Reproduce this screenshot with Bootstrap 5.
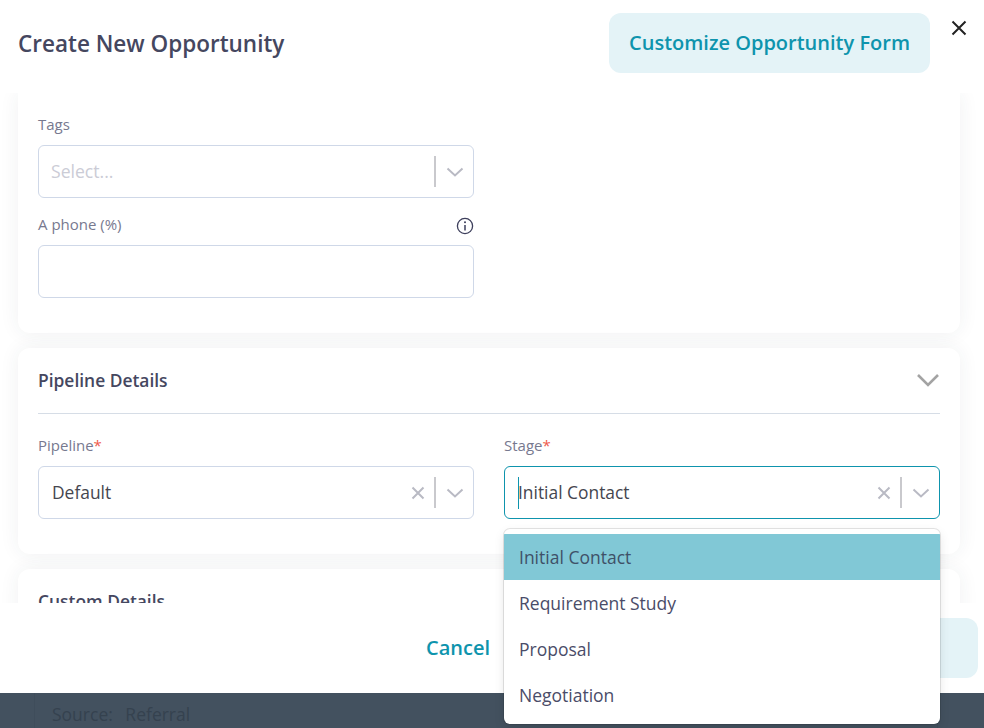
<!DOCTYPE html>
<html lang="en">
<head>
<meta charset="utf-8">
<title>Create New Opportunity</title>
<link href="https://cdn.jsdelivr.net/npm/bootstrap@5.3.0/dist/css/bootstrap.min.css" rel="stylesheet">
<style>
html,body{height:728px;overflow:hidden}
body{font-family:"Open Sans","Noto Sans",sans-serif;background:#43515f;color:#3d3f5c;position:relative}
.sheet{height:693px;background:#fff;display:flex;flex-direction:column}
.sheet-head{height:93px;padding:13px 54px 20px 18px;position:relative}
.sheet-title{font-size:22.5px;font-weight:600;color:#45475f;margin:0;line-height:62px}
.btn-soft{background:#e4f3f7;color:#0e94ad;font-weight:600;font-size:20px;border-radius:12px;border:0;height:60px;padding:0 20px}
.x-close{position:absolute;top:19px;right:16px;width:18px;height:18px;background:none;border:0;padding:0;line-height:0}
.sheet-body{height:510px;overflow:hidden;padding:0 24px 0 18px;background:#fff}
.panel{background:#fff;border-radius:12px;box-shadow:0 0 20px rgba(40,50,70,.07);padding:0 20px;margin-bottom:15px}
.panel-first{height:240px;padding-top:21px;border-radius:0 0 12px 12px}
.panel-second{height:206px;padding-top:16px}
.panel-third{height:70px;padding-top:16px}
.panel-head{font-size:17.4px;font-weight:600;color:#45475f;line-height:32px}
.panel-rule{border-top:1px solid #d6dde6;margin-top:17px;padding-top:21px}
.half{width:436px}
.fld-label{font-size:15px;color:#77798f;line-height:21px;margin-bottom:10px}
.fld-info{margin-top:2px}
.req{color:#ef5a4c}
.fld-box{height:53px;border:1px solid #cfd8e8;border-radius:6px;font-size:17.4px;color:#45464f;padding:0 0 0 13px;background:#fff}
.fld-focus{border-color:#0e94ad}
.fld-muted{color:#cbccd6;padding-left:12px;font-size:17.6px}
.caret-bar{width:1px;height:32px;background:#0e94ad;margin-right:-1px}
.ind-x{margin-right:9px;line-height:0}
.ind-sep{width:2px;height:31px;background:#c9c9cd}
.ind-chev{width:37px;text-align:center;line-height:0}
.sheet-foot{height:90px;background:#fff;padding:15px 6px 15px 0;position:relative;z-index:1}
.link-cancel{color:#0e94ad;font-size:20px;font-weight:600;text-decoration:none;margin-right:14px}
.btn-save{width:474px;height:60px;background:#e4f3f7;border:0;border-radius:12px}
.drop{position:absolute;left:504px;top:529px;width:436px;height:195px;background:#fff;border-radius:6px;box-shadow:0 0 0 1px rgba(0,0,0,.1),0 4px 11px rgba(0,0,0,.1);padding:5px 0;z-index:5;overflow:hidden}
.drop-item{height:46px;line-height:46px;padding-left:15px;font-size:17.5px;color:#4a4c68}
.drop-on{background:#81c8d6;color:#3f5168}
.under{position:absolute;left:52px;top:702px;font-size:17.5px;color:#35424f;line-height:24px;word-spacing:8px}
.under-panel{position:absolute;left:34px;top:693px;width:904px;height:35px;border-left:1px solid #3f4d5b;border-right:1px solid #3f4d5b}
</style>
</head>
<body>
<div class="sheet">
  <div class="sheet-head d-flex justify-content-between">
    <h1 class="sheet-title">Create New Opportunity</h1>
    <button class="btn-soft" type="button">Customize Opportunity Form</button>
    <button class="x-close" type="button" aria-label="Close"><svg width="18" height="18" viewBox="0 0 18 18"><path d="M2.5 2.5l13 13M15.5 2.5l-13 13" stroke="#222" stroke-width="2" fill="none"/></svg></button>
  </div>
  <div class="sheet-body">
    <div class="panel panel-first">
      <div class="half">
        <div class="fld-label">Tags</div>
        <div class="fld-box fld-muted d-flex align-items-center mb-3">
          <span class="flex-grow-1">Select...</span>
          <span class="ind-sep"></span>
          <span class="ind-chev"><svg width="18" height="10" viewBox="0 0 18 10"><path d="M1.5 1.5L9 8.5l7.500-7" stroke="#b9bac4" stroke-width="2" fill="none"/></svg></span>
        </div>
        <div class="fld-label d-flex justify-content-between align-items-center">
          <span>A phone (%)</span>
          <svg class="fld-info" width="18" height="18" viewBox="0 0 18 18"><circle cx="9" cy="9" r="7.600" stroke="#3d3f5c" stroke-width="1.300" fill="none"/><path d="M9 8v5.500" stroke="#3d3f5c" stroke-width="1.500"/><circle cx="9" cy="5.300" r="1" fill="#3d3f5c"/></svg>
        </div>
        <div class="fld-box"></div>
      </div>
    </div>
    <div class="panel panel-second">
      <div class="panel-head d-flex justify-content-between align-items-center">
        <span>Pipeline Details</span>
        <svg width="24" height="14" viewBox="0 0 24 14"><path d="M2 2l10 10L22 2" stroke="#a3a3a3" stroke-width="2.600" fill="none"/></svg>
      </div>
      <div class="panel-rule d-flex justify-content-between">
        <div class="half">
          <div class="fld-label">Pipeline<span class="req">*</span></div>
          <div class="fld-box d-flex align-items-center">
            <span class="flex-grow-1">Default</span>
            <span class="ind-x"><svg width="14" height="14" viewBox="0 0 14 14"><path d="M1.500 1.500l11 11M12.500 1.500l-11 11" stroke="#b9bac4" stroke-width="2" fill="none"/></svg></span>
            <span class="ind-sep"></span>
            <span class="ind-chev"><svg width="18" height="10" viewBox="0 0 18 10"><path d="M1.500 1.500L9 8.500l7.500-7" stroke="#b9bac4" stroke-width="2" fill="none"/></svg></span>
          </div>
        </div>
        <div class="half">
          <div class="fld-label">Stage<span class="req">*</span></div>
          <div class="fld-box fld-focus d-flex align-items-center">
            <span class="caret-bar"></span>
            <span class="flex-grow-1">Initial Contact</span>
            <span class="ind-x"><svg width="14" height="14" viewBox="0 0 14 14"><path d="M1.500 1.500l11 11M12.500 1.500l-11 11" stroke="#b9bac4" stroke-width="2" fill="none"/></svg></span>
            <span class="ind-sep"></span>
            <span class="ind-chev"><svg width="18" height="10" viewBox="0 0 18 10"><path d="M1.500 1.500L9 8.500l7.500-7" stroke="#b9bac4" stroke-width="2" fill="none"/></svg></span>
          </div>
        </div>
      </div>
    </div>
    <div class="panel panel-third">
      <div class="panel-head">Custom Details</div>
    </div>
  </div>
  <div class="sheet-foot d-flex justify-content-end align-items-center">
    <a class="link-cancel" href="#">Cancel</a>
    <button class="btn-save" type="button" aria-label="Save"></button>
  </div>
</div>
<div class="under-panel"></div>
<div class="under">Source: Referral</div>
<div class="drop">
  <div class="drop-item drop-on">Initial Contact</div>
  <div class="drop-item">Requirement Study</div>
  <div class="drop-item">Proposal</div>
  <div class="drop-item">Negotiation</div>
</div>
<script src="https://cdn.jsdelivr.net/npm/bootstrap@5.3.0/dist/js/bootstrap.bundle.min.js"></script>
</body>
</html>
